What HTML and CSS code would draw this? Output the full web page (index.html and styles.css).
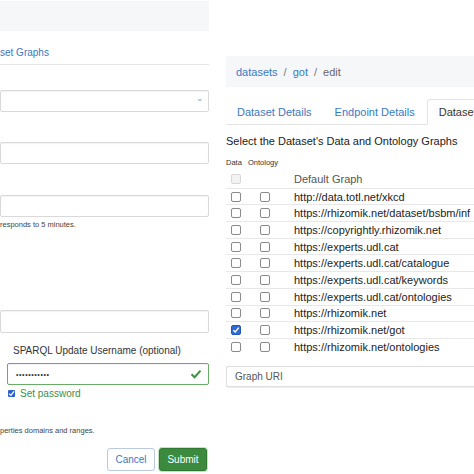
FILE: index.html
```html
<!DOCTYPE html>
<html>
<head>
<meta charset="utf-8">
<link rel="stylesheet" href="styles.css">
</head>
<body>
<div class="page">
  <div class="left">
    <div class="topbar"></div>
    <div class="subtabs"><span class="subtab">set Graphs</span></div>
    <div class="field select"><span class="chev">&#8964;</span></div>
    <div class="field f1"></div>
    <div class="field f2"></div>
    <div class="help h1">responds to 5 minutes.</div>
    <div class="field f3"></div>
    <div class="label">SPARQL Update Username (optional)</div>
    <div class="field pw"><span class="dots">•••••••••••</span>
      <svg class="okmark" width="12" height="10" viewBox="0 0 12 10"><path d="M1.5 5.2 L4.6 8.2 L10.5 1.6" fill="none" stroke="#3f9142" stroke-width="2"/></svg>
    </div>
    <div class="setpw"><span class="cbx-filled"><svg width="7" height="7" viewBox="0 0 7 7"><path d="M1 3.6 L2.9 5.4 L6 1.4" fill="none" stroke="#fff" stroke-width="1.3"/></svg></span><span class="setpw-text">Set password</span></div>
    <div class="help h2">perties domains and ranges.</div>
    <div class="buttons">
      <button class="btn cancel">Cancel</button>
      <button class="btn submit">Submit</button>
    </div>
  </div>
  <div class="right">
    <div class="crumbs"><a class="lnk">datasets</a><span class="sep">/</span><a class="lnk">got</a><span class="sep">/</span><span class="cur">edit</span></div>
    <div class="tabs">
      <span class="tab">Dataset Details</span>
      <span class="tab">Endpoint Details</span>
      <span class="tab active">Dataset Graphs</span>
    </div>
    <div class="heading">Select the Dataset's Data and Ontology Graphs</div>
    <div class="colhead"><span class="ch1">Data</span><span class="ch2">Ontology</span></div>
    <div class="rows">
      <div class="row first"><span class="cb disabled"></span><span class="cb none"></span><span class="uri muted">Default Graph</span></div>
      <div class="row"><span class="cb"></span><span class="cb"></span><span class="uri">http://data.totl.net/xkcd</span></div>
      <div class="row"><span class="cb"></span><span class="cb"></span><span class="uri">https://rhizomik.net/dataset/bsbm/inf</span></div>
      <div class="row"><span class="cb"></span><span class="cb"></span><span class="uri">https://copyrightly.rhizomik.net</span></div>
      <div class="row"><span class="cb"></span><span class="cb"></span><span class="uri">https://experts.udl.cat</span></div>
      <div class="row"><span class="cb"></span><span class="cb"></span><span class="uri">https://experts.udl.cat/catalogue</span></div>
      <div class="row"><span class="cb"></span><span class="cb"></span><span class="uri">https://experts.udl.cat/keywords</span></div>
      <div class="row"><span class="cb"></span><span class="cb"></span><span class="uri">https://experts.udl.cat/ontologies</span></div>
      <div class="row"><span class="cb"></span><span class="cb"></span><span class="uri">https://rhizomik.net</span></div>
      <div class="row"><span class="cb checked"><svg width="8" height="8" viewBox="0 0 8 8"><path d="M1.3 4.2 L3.2 6 L6.8 1.6" fill="none" stroke="#fff" stroke-width="1.4"/></svg></span><span class="cb"></span><span class="uri">https://rhizomik.net/got</span></div>
      <div class="row"><span class="cb"></span><span class="cb"></span><span class="uri">https://rhizomik.net/ontologies</span></div>
    </div>
    <div class="field graphuri">Graph URI</div>
  </div>
</div>
</body>
</html>
```
FILE: styles.css
```css
html, body {
  margin: 0;
  padding: 0;
  background: #fff;
  overflow: hidden;
  width: 474px;
  height: 474px;
}
body {
  font-family: "Liberation Sans", Arial, sans-serif;
  color: #333;
}
.page {
  display: flex;
  gap: 17px;
  width: 474px;
  height: 474px;
  overflow: hidden;
}
.left {
  width: 209px;
  flex: none;
  display: flex;
  flex-direction: column;
}
.right {
  width: 300px;
  flex: none;
  display: flex;
  flex-direction: column;
}
.topbar {
  margin-top: 1px;
  height: 30px;
  background: #f6f7f9;
}
.subtabs {
  margin-top: 14px;
  height: 20px;
  border-bottom: 1px solid #e6e6e6;
  box-sizing: border-box;
}
.subtab {
  font-size: 10px;
  line-height: 16px;
  color: #3b78c4;
  display: block;
}
.field {
  box-sizing: border-box;
  border: 1px solid #d9d9d9;
  border-radius: 2px;
  height: 22px;
  background: #fff;
  box-shadow: inset 0 1px 1px rgba(0,0,0,0.05);
}
.select {
  margin-top: 25px;
  display: flex;
  justify-content: flex-end;
  align-items: center;
  padding-right: 4px;
}
.chev {
  font-size: 9px;
  color: #999;
  line-height: 9px;
  margin-top: -5px;
}
.f1 { margin-top: 30px; }
.f2 { margin-top: 31px; }
.help {
  font-size: 7.5px;
  line-height: 12px;
  color: #444;
}
.h1 { margin-top: 2px; }
.f3 { margin-top: 79px; height: 23px; }
.label {
  margin-top: 11px;
  margin-left: 13px;
  font-size: 10px;
  line-height: 14px;
  color: #333;
}
.pw {
  margin-top: 5px;
  margin-left: 7px;
  border-color: #6aab6a;
  display: flex;
  align-items: center;
  justify-content: space-between;
  padding: 0 6px 0 8px;
}
.dots {
  font-size: 7px;
  letter-spacing: 0.6px;
  color: #333;
}
.setpw {
  margin-top: 2px;
  margin-left: 8px;
  display: flex;
  align-items: center;
  height: 12px;
}
.cbx-filled {
  width: 7px;
  height: 7px;
  background: #2d63c8;
  border-radius: 1px;
  display: flex;
}
.setpw-text {
  margin-left: 5px;
  font-size: 10px;
  color: #3f8f43;
}
.h2 { margin-top: 26px; }
.buttons {
  margin-top: 11px;
  display: flex;
  justify-content: flex-end;
  gap: 4px;
  padding-right: 2px;
}
.btn {
  box-sizing: border-box;
  height: 23px;
  width: 48px;
  font-family: "Liberation Sans", Arial, sans-serif;
  font-size: 10px;
  border-radius: 3px;
  padding: 0;
}
.cancel {
  background: #fff;
  border: 1px solid #b9c9e0;
  color: #3b78c4;
}
.submit {
  background: #3b8a3e;
  border: 1px solid #2f7a32;
  color: #fff;
  box-shadow: 0 0 0 1px #c6e2c6;
}

/* right */
.crumbs {
  margin-top: 56px;
  height: 31px;
  background: #f6f7f9;
  padding-left: 10px;
  display: flex;
  align-items: center;
  font-size: 11px;
}
.lnk { color: #3b78c4; }
.sep { color: #777; margin: 0 6px; }
.cur { color: #666; }
.tabs {
  margin-top: 12px;
  height: 26px;
  box-sizing: border-box;
  border-bottom: 1px solid #e3e3e3;
  display: flex;
  align-items: stretch;
}
.tab {
  flex: none;
  white-space: nowrap;
  padding: 0 11px 0 11px;
  font-size: 11px;
  color: #3b78c4;
  display: flex;
  align-items: center;
  margin-right: 1px;
}
.tab.active {
  color: #333;
  border: 1px solid #e3e3e3;
  border-bottom: 1px solid #fff;
  border-radius: 3px 3px 0 0;
  margin-bottom: -1px;
  background: #fff;
}
.heading {
  margin-top: 8px;
  font-size: 11px;
  line-height: 16px;
  color: #222;
}
.colhead {
  margin-top: 9px;
  margin-bottom: 3px;
  font-size: 7.5px;
  line-height: 10px;
  color: #333;
  display: flex;
}
.ch1 { width: 22px; }
.rows {
  display: flex;
  flex-direction: column;
}
.row {
  height: 16.7px;
  box-sizing: border-box;
  border-top: 1px solid #e8e8e8;
  display: flex;
  align-items: center;
  padding-left: 5px;
}
.row.first { border-top: none; }
.cb {
  width: 8px;
  height: 8px;
  border: 1px solid #8a8a8a;
  border-radius: 2px;
  flex: none;
  margin-right: 19px;
  display: flex;
  align-items: center;
  justify-content: center;
}
.cb.disabled { border-color: #d8d8d8; background: #f3f3f3; }
.cb.none { border-color: transparent; }
.cb.checked { background: #2f6bd2; border-color: #2559b8; }
.uri {
  margin-left: 5px;
  font-size: 11px;
  color: #222;
  white-space: nowrap;
}
.uri.muted { color: #555; }
.graphuri {
  margin-top: 11px;
  height: 21px;
  font-size: 10px;
  color: #555;
  display: flex;
  align-items: center;
  padding-left: 8px;
  border-color: #dedede;
  box-shadow: 0 1px 1px rgba(0,0,0,0.08);
}
```
